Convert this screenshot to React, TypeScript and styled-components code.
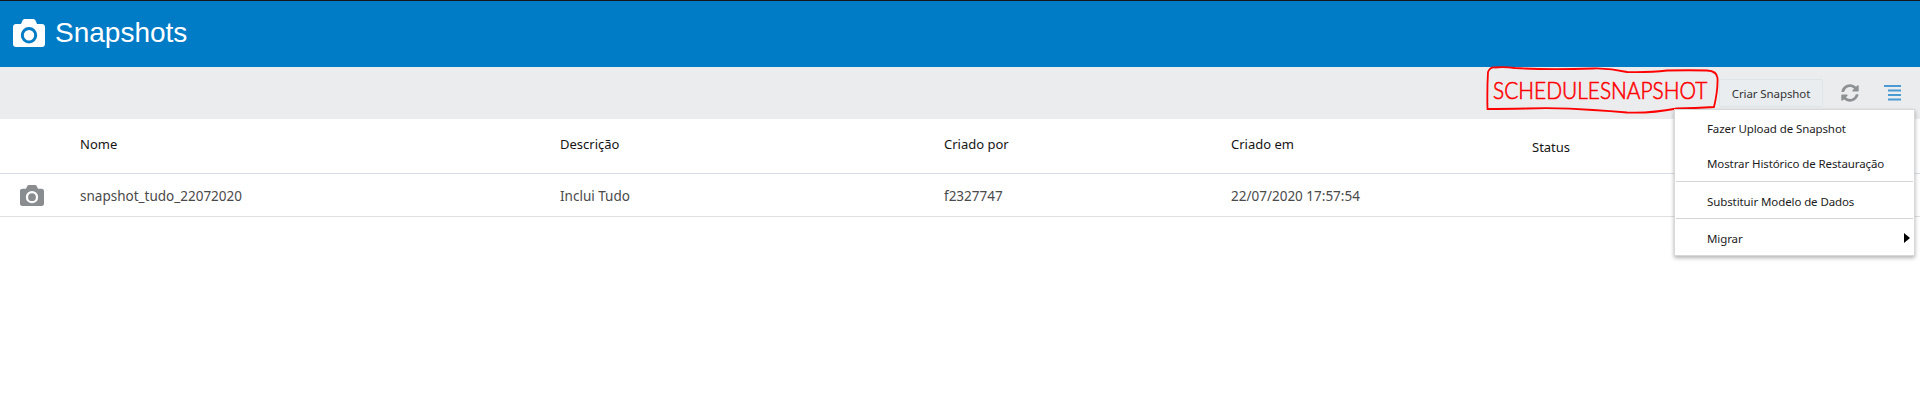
import React, { FC } from 'react'
import { FaSyncAlt } from 'react-icons/fa'
import styled, { createGlobalStyle } from 'styled-components'

const uiFont = '"Noto Sans", "Open Sans", sans-serif'

const columns = ['Nome', 'Descrição', 'Criado por', 'Criado em', 'Status']

const snapshots = [
  {
    name: 'snapshot_tudo_22072020',
    description: 'Inclui Tudo',
    createdBy: 'f2327747',
    createdAt: '22/07/2020 17:57:54',
    status: '',
  },
]

const CameraIcon: FC<{ width: number; height: number }> = ({ width, height }) => (
  <svg width={width} height={height} viewBox="0 0 32 28" fill="currentColor">
    <path
      fillRule="evenodd"
      d="M3 5h5l1.5-3.5C10 .5 11 0 12 0h8c1 0 2 .5 2.500 1.500L24 5h5c1.700 0 3 1.300 3 3v17c0 1.700-1.300 3-3 3H3c-1.700 0-3-1.300-3-3V8c0-1.700 1.300-3 3-3zM16 8a8.200 8.200 0 1 0 0 16.400A8.200 8.200 0 0 0 16 8zm0 3a5.200 5.200 0 1 1 0 10.400A5.200 5.200 0 0 1 16 11z"
    />
  </svg>
)

const ListIcon = () => (
  <svg width="17" height="16" viewBox="0 0 17 16" fill="#4a9ad4">
    <rect x="0" y="0" width="17" height="2" />
    <rect x="4" y="4.500" width="13" height="2" />
    <rect x="4" y="9" width="13" height="2" />
    <rect x="4" y="13.500" width="13" height="2" />
  </svg>
)

const App: FC = () => (
  <Page>
    <GlobalStyle />
    <Header>
      <CameraIcon width={32} height={28} />
      <Title>Snapshots</Title>
    </Header>
    <Toolbar>
      <Annotation>
        <AnnotationOutline width="235" height="50" viewBox="0 0 235 50">
          <path d="M3 7Q5 2 10 2.500Q18 1.500 30 3Q60 5 108 3.500Q125 3 142 7Q165 7.500 182 5.500Q205 5 222 5.500Q232 6 232.500 13Q233 25 229 42Q210 43 192 43.500Q165 48.500 142 47.500Q125 46 108 45Q75 42.500 42 43.500Q20 44 2.500 44Q2 25 3 7Z" />
        </AnnotationOutline>
        <AnnotationText>SCHEDULESNAPSHOT</AnnotationText>
      </Annotation>
      <Button>Criar Snapshot</Button>
      <IconButton $color="#8e9194">
        <FaSyncAlt size={18} />
      </IconButton>
      <IconButton $color="#4a9ad4">
        <ListIcon />
      </IconButton>
      <Menu>
        <MenuItem>Fazer Upload de Snapshot</MenuItem>
        <MenuItem>Mostrar Histórico de Restauração</MenuItem>
        <MenuDivider />
        <MenuItem $afterDivider>Substituir Modelo de Dados</MenuItem>
        <MenuDivider />
        <MenuItem $afterDivider>
          Migrar
          <SubmenuArrow />
        </MenuItem>
      </Menu>
    </Toolbar>
    <TableHead>
      <span />
      {columns.map(column => (
        <HeadCell key={column} $low={column === 'Status'}>
          {column}
        </HeadCell>
      ))}
    </TableHead>
    {snapshots.map(snapshot => (
      <TableRow key={snapshot.name}>
        <RowIcon>
          <CameraIcon width={24} height={21} />
        </RowIcon>
        <Cell>{snapshot.name}</Cell>
        <Cell>{snapshot.description}</Cell>
        <Cell>{snapshot.createdBy}</Cell>
        <Cell>{snapshot.createdAt}</Cell>
        <Cell>{snapshot.status}</Cell>
      </TableRow>
    ))}
  </Page>
)

const GlobalStyle = createGlobalStyle`
  html, body {
    margin: 0;
    background: #fff;
  }
  body {
    font-family: ${uiFont};
    font-size: 13px;
  }
`
const Page = styled.div`
  min-height: 100vh;
  overflow: hidden;
`
const Header = styled.header`
  display: flex;
  align-items: center;
  gap: 10px;
  box-sizing: border-box;
  height: 67px;
  padding: 0 0 2px 13px;
  border-top: 1px solid #14181c;
  background: #007cc7;
  color: #fff;
`
const Title = styled.h1`
  margin: 0;
  font-family: 'Liberation Sans', Arial, sans-serif;
  font-size: 28px;
  font-weight: 400;
`
const Toolbar = styled.div`
  position: relative;
  display: flex;
  justify-content: flex-end;
  align-items: center;
  gap: 6px;
  box-sizing: border-box;
  height: 52px;
  padding-right: 10px;
  background: #ebecee;
`
const Annotation = styled.div`
  position: absolute;
  top: -2px;
  right: 200px;
  display: flex;
  align-items: center;
  width: 235px;
  height: 50px;
`
const AnnotationOutline = styled.svg`
  position: absolute;
  inset: 0;
  fill: none;
  stroke: #f00;
  stroke-width: 1.800;
`
const AnnotationText = styled.span`
  margin-left: 8px;
  font-family: Lato, 'Liberation Sans', sans-serif;
  font-size: 24px;
  font-weight: 300;
  line-height: 1;
  white-space: nowrap;
  color: #f00;
  -webkit-text-stroke: 0.6px #f00;
  transform: scaleX(0.87);
  transform-origin: left center;
`
const Button = styled.button`
  box-sizing: border-box;
  width: 104px;
  height: 28px;
  margin-right: 3px;
  padding: 0;
  border: 1px solid #dfe4e7;
  border-radius: 2px;
  background: #e9edf0;
  font-family: ${uiFont};
  font-size: 11.500px;
  letter-spacing: -0.1px;
  color: #333;
`
const IconButton = styled.div<{ $color: string }>`
  display: flex;
  justify-content: center;
  align-items: center;
  width: 36px;
  height: 28px;
  color: ${props => props.$color};
`
const Menu = styled.div`
  position: absolute;
  top: 42px;
  right: 5px;
  z-index: 2;
  box-sizing: border-box;
  width: 241px;
  padding-top: 1px;
  border: 1px solid #d8d8d8;
  background: #fff;
  box-shadow: 0 2px 4px rgba(0, 0, 0, 0.3);
`
const MenuItem = styled.div<{ $afterDivider?: boolean }>`
  position: relative;
  display: flex;
  align-items: center;
  box-sizing: border-box;
  height: ${props => (props.$afterDivider ? '36px' : '35px')};
  padding: ${props => (props.$afterDivider ? '3px' : '0')} 0 0 32px;
  font-size: 11.500px;
  letter-spacing: -0.1px;
  color: #1c1c1c;
`
const MenuDivider = styled.div`
  height: 1px;
  margin: 0 1px;
  background: #d5d5d5;
`
const SubmenuArrow = styled.span`
  position: absolute;
  top: 14px;
  right: 4px;
  border-top: 5px solid transparent;
  border-bottom: 5px solid transparent;
  border-left: 6px solid #000;
`
const TableHead = styled.div`
  display: grid;
  grid-template-columns: 80px 480px 384px 287px 301px 1fr;
  align-items: center;
  box-sizing: border-box;
  height: 55px;
  border-bottom: 1px solid #d6dfe6;
  padding-bottom: 4px;
`
const HeadCell = styled.div<{ $low?: boolean }>`
  padding-top: ${props => (props.$low ? '5px' : '0')};
  font-size: 13px;
  color: #161513;
`
const TableRow = styled.div`
  display: grid;
  grid-template-columns: 80px 480px 384px 287px 301px 1fr;
  align-items: center;
  box-sizing: border-box;
  height: 43px;
  border-bottom: 1px solid #e0e0e0;
`
const RowIcon = styled.div`
  display: flex;
  padding-left: 20px;
  color: #8a8d90;
`
const Cell = styled.div`
  padding-top: 2px;
  font-size: 13.500px;
  color: #4a4a4a;
`

export default App
